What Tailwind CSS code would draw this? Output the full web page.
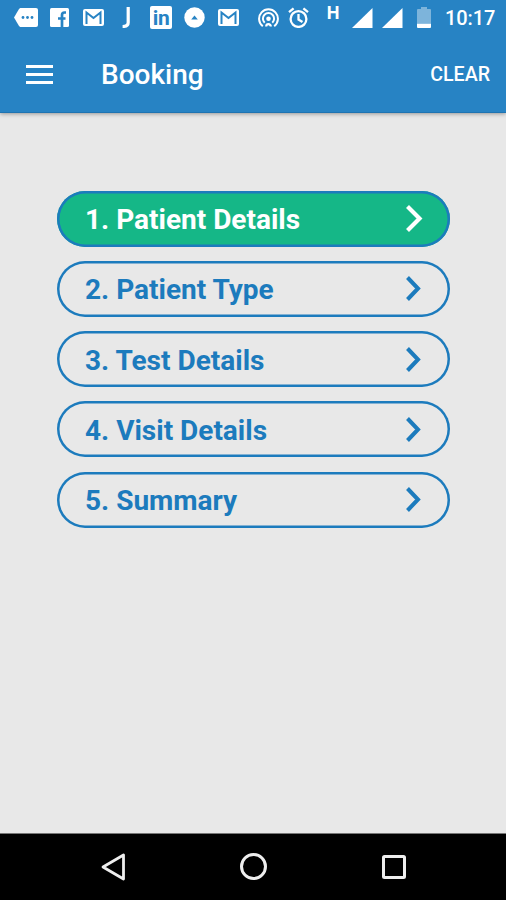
<!DOCTYPE html>
<html lang="en">
<head>
    <meta charset="UTF-8">
    <meta name="viewport" content="width=device-width, initial-scale=1.0">
    <title>Booking</title>
    <script src="https://cdn.jsdelivr.net/npm/@tailwindcss/browser@4"></script>
</head>
<body class="bg-[#e8e8e8] font-['Roboto',sans-serif]">
    <div class="h-[900px] w-[506px] flex flex-col overflow-hidden">
        <!-- Header -->
        <header class="h-[113px] shrink-0 bg-[#2783c4] text-white border-b border-[#1f74b2] shadow-[0_1px_4px_rgba(0,0,0,0.35)]">
            <!-- Status bar -->
            <div class="h-9 flex items-start">
                <svg class="mt-2 ml-[14px] w-6 h-[19px]" viewBox="0 0 24 19">
                    <path fill="#fff" d="M7 0h15a2 2 0 0 1 2 2v15a2 2 0 0 1-2 2H7c-1 0-1.500-.5-2-1L0 9.500 5 1c.5-.5 1-1 2-1z"/>
                    <g fill="#2783c4"><circle cx="9" cy="9.500" r="1.400"/><circle cx="13.500" cy="9.500" r="1.400"/><circle cx="18" cy="9.500" r="1.400"/></g>
                </svg>
                <svg class="mt-2 ml-3 w-[19px] h-[19px]" viewBox="0 0 19 19">
                    <rect width="19" height="19" rx="1.500" fill="#fff"/>
                    <path fill="none" stroke="#2783c4" stroke-width="2.700" d="M16 4.500h-1.500c-1.800 0-2.500.8-2.500 2.500v12M8 10.500h7.500"/>
                </svg>
                <svg class="mt-[9px] ml-[14px] w-[21px] h-[17px]" viewBox="0 0 21 17">
                    <rect width="21" height="17" rx="2" fill="#fff"/>
                    <path fill="none" stroke="#2783c4" stroke-width="2" d="M3.500 15V3.500l7 5.500 7-5.500V15"/>
                </svg>
                <svg class="mt-[7px] ml-[18px] w-2 h-[21px]" viewBox="0 0 8 21">
                    <path fill="none" stroke="#fff" stroke-width="3.200" d="M6.200 0v15.500c0 2.800-1.800 4-5.600 4"/>
                </svg>
                <div class="mt-[6px] ml-5 w-[22px] h-[23px] rounded-[2px] bg-white text-[#2783c4] text-[21px] leading-[24px] font-bold text-center tracking-tight">in</div>
                <svg class="mt-[7px] ml-[12px] w-[21px] h-[21px]" viewBox="0 0 21 21">
                    <circle cx="10.500" cy="10.500" r="10.200" fill="#fff"/>
                    <path fill="#2783c4" d="M7.200 12.500l3.300-4 3.300 4z"/>
                </svg>
                <svg class="mt-[9px] ml-[13px] w-[21px] h-[17px]" viewBox="0 0 21 17">
                    <rect width="21" height="17" rx="2" fill="#fff"/>
                    <path fill="none" stroke="#2783c4" stroke-width="2" d="M3.500 15V3.500l7 5.500 7-5.500V15"/>
                </svg>
                <svg class="mt-2 ml-[19px] w-[21px] h-5" viewBox="0 0 21 20" fill="none" stroke="#fff" stroke-width="2">
                    <path d="M4.800 18.200a9.400 9.400 0 1 1 11.400 0"/>
                    <path d="M6.700 14.800a5.600 5.600 0 1 1 7.600 0"/>
                    <circle cx="10.500" cy="10.700" r="2.300" fill="#fff" stroke="none"/>
                    <path d="M8.200 18.500a2.300 2.300 0 0 1 4.600 0" stroke-width="2.200"/>
                </svg>
                <svg class="mt-[7px] ml-[9px] w-[21px] h-[21px]" viewBox="0 0 21 21" fill="none" stroke="#fff" stroke-width="2.300">
                    <circle cx="10.500" cy="12" r="7.900"/>
                    <path d="M10.500 7v5.500l4 2.400M1 5.200L5.600 1.300M20 5.200l-4.600-3.900"/>
                </svg>
                <span class="mt-[2px] ml-[17px] w-[14px] text-[18px] leading-[21px] font-bold text-center">H</span>
                <svg class="mt-2 ml-[12px] w-[21px] h-[21px]" viewBox="0 0 21 21"><path fill="#fff" d="M0 20L20.500 0v20z"/></svg>
                <svg class="mt-2 ml-[9px] w-[21px] h-[21px]" viewBox="0 0 21 21"><path fill="#fff" d="M0 20L20.500 0v20z"/></svg>
                <svg class="mt-[7px] ml-[14px] w-[14px] h-[21px]" viewBox="0 0 14 21">
                    <path fill="#fff" fill-opacity=".4" d="M4 0h6v2h3a1 1 0 0 1 1 1v13H0V3a1 1 0 0 1 1-1h3z"/>
                    <path fill="#fff" d="M0 16.500h14V20a1 1 0 0 1-1 1H1a1 1 0 0 1-1-1z"/>
                </svg>
                <span class="mt-[6px] ml-[14px] text-[20px] leading-6 font-medium tracking-[-0.1px]">10:17</span>
            </div>
            <!-- Toolbar -->
            <div class="h-[76px] flex items-center pl-[26px] pr-4">
                <button class="w-[27px] h-[19px] flex flex-col justify-between">
                    <span class="w-full h-[3px] bg-white"></span>
                    <span class="w-full h-[3px] bg-white"></span>
                    <span class="w-full h-[3px] bg-white"></span>
                </button>
                <h1 class="ml-[48px] pt-[2px] text-[28px] font-medium">Booking</h1>
                <button class="ml-auto pt-px text-[19.6px] font-medium">CLEAR</button>
            </div>
        </header>

        <!-- Steps -->
        <main class="flex-1 pt-[77.5px] pl-[57px]">
            <ul class="w-[393px] flex flex-col gap-[14.3px] text-[28px] font-bold text-[#1c7bbd]">
                <li class="h-14 rounded-full bg-[#15b787] text-white shadow-[inset_0_0_0_2.5px_#1c7bbd] flex items-center justify-between pl-7 pr-[27px]">
                    <span class="pt-[3px]">1. Patient Details</span>
                    <svg class="w-[17px] h-[27px]" viewBox="0 0 17 27"><path fill="none" stroke="currentColor" stroke-width="4.200" d="M1.500 1.500L13.500 13.500 1.500 25.500"/></svg>
                </li>
                <li class="h-14 rounded-full shadow-[inset_0_0_0_2.5px_#1c7bbd] flex items-center justify-between pl-7 pr-[27px]">
                    <span class="pt-[3px]">2. Patient Type</span>
                    <svg class="w-[17px] h-[27px]" viewBox="0 0 17 27"><path fill="none" stroke="currentColor" stroke-width="4" d="M1.500 2.500L12 13.500 1.500 24.500"/></svg>
                </li>
                <li class="h-14 rounded-full shadow-[inset_0_0_0_2.5px_#1c7bbd] flex items-center justify-between pl-7 pr-[27px]">
                    <span class="pt-[3px]">3. Test Details</span>
                    <svg class="w-[17px] h-[27px]" viewBox="0 0 17 27"><path fill="none" stroke="currentColor" stroke-width="4" d="M1.500 2.500L12 13.500 1.500 24.500"/></svg>
                </li>
                <li class="h-14 rounded-full shadow-[inset_0_0_0_2.5px_#1c7bbd] flex items-center justify-between pl-7 pr-[27px]">
                    <span class="pt-[3px]">4. Visit Details</span>
                    <svg class="w-[17px] h-[27px]" viewBox="0 0 17 27"><path fill="none" stroke="currentColor" stroke-width="4" d="M1.500 2.500L12 13.500 1.500 24.500"/></svg>
                </li>
                <li class="h-14 rounded-full shadow-[inset_0_0_0_2.5px_#1c7bbd] flex items-center justify-between pl-7 pr-[27px]">
                    <span class="pt-[3px]">5. Summary</span>
                    <svg class="w-[17px] h-[27px]" viewBox="0 0 17 27"><path fill="none" stroke="currentColor" stroke-width="4" d="M1.500 2.500L12 13.500 1.500 24.500"/></svg>
                </li>
            </ul>
        </main>

        <!-- Navigation bar -->
        <nav class="h-[67px] shrink-0 bg-black border-t border-[#777] flex items-center pl-[101px]">
            <svg class="w-6 h-7" viewBox="0 0 24 28"><path fill="none" stroke="#eee" stroke-width="2.800" stroke-linejoin="round" d="M22.500 2v24L2 14z"/></svg>
            <svg class="ml-[115px] w-7 h-7" viewBox="0 0 28 28"><circle cx="13.500" cy="13.500" r="12" fill="none" stroke="#eee" stroke-width="3"/></svg>
            <svg class="ml-[114px] w-6 h-6" viewBox="0 0 24 24"><rect x="1.500" y="1.500" width="21" height="21" rx="1" fill="none" stroke="#eee" stroke-width="3"/></svg>
        </nav>
    </div>
</body>
</html>
